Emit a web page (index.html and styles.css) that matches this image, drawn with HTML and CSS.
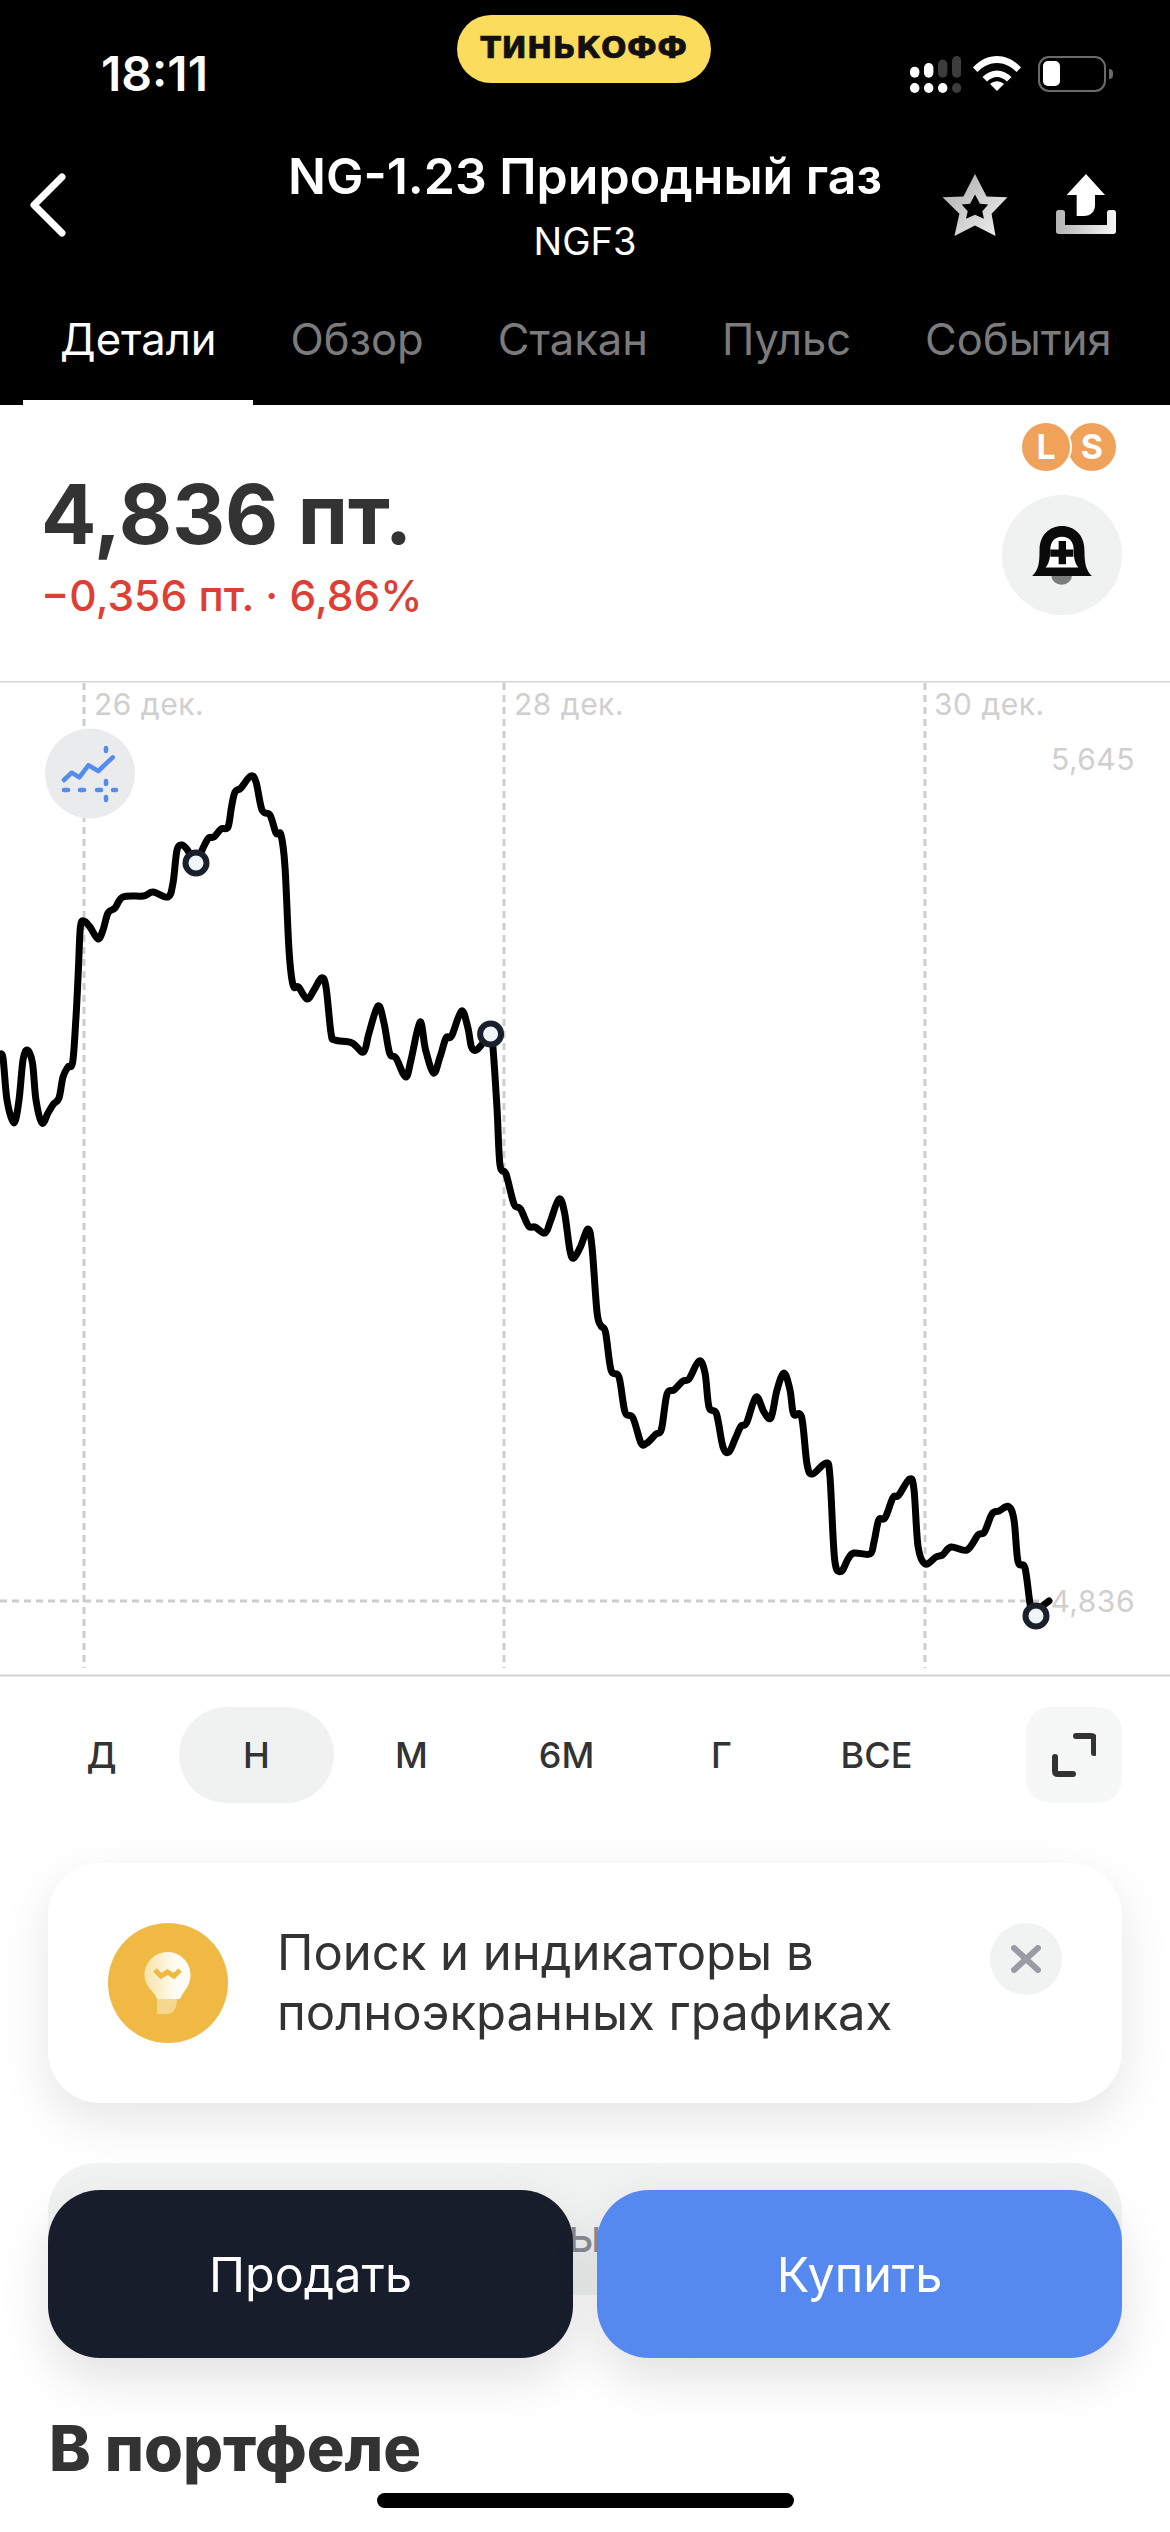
FILE: index.html
```html
<!doctype html>
<html lang="ru">
  <head>
    <meta charset="UTF-8" />
    <meta name="viewport" content="width=device-width, initial-scale=1" />
    <title>NG-1.23 Природный газ</title>
    <link rel="stylesheet" href="styles.css">
  </head>
  <body>
    <div class="phone">
      <header class="top">
        <div class="status">
          <span class="time">18:11</span>
          <div class="status-icons">
            <svg class="signal" width="54" height="44" viewBox="0 0 54 44">
              <rect x="3" y="10.7" width="9.4" height="11" rx="4.7" fill="#fff"/>
              <rect x="17" y="7" width="9.4" height="14.7" rx="4.7" fill="#fff"/>
              <rect x="31" y="3.5" width="9.4" height="18.2" rx="4.7" fill="#3c3c3c"/>
              <rect x="45" y="0" width="9.4" height="21.7" rx="4.7" fill="#3c3c3c"/>
              <rect x="3" y="27" width="9.4" height="10" rx="4.7" fill="#fff"/>
              <rect x="17" y="27" width="9.4" height="10" rx="4.7" fill="#fff"/>
              <rect x="31" y="27" width="9.4" height="10" rx="4.7" fill="#fff"/>
              <rect x="45" y="27" width="9.4" height="10" rx="4.7" fill="#3c3c3c"/>
            </svg>
            <svg class="wifi" width="48" height="35" viewBox="0 0 48 35">
              <path d="M0 11.5 C14 -3.8 34 -3.8 48 11.5 L43.6 16 C31.5 4 16.5 4 4.4 16 Z" fill="#fff"/>
              <path d="M9.5 21 C18 12.2 30 12.2 38.5 21 L34 25.4 C27.5 19.4 20.5 19.4 14 25.4 Z" fill="#fff"/>
              <path d="M17 28 C21.5 24.3 26.5 24.3 31 28 L24 35 Z" fill="#fff"/>
            </svg>
            <div class="battery"><span class="battery-level"></span></div>
            <span class="battery-tip"></span>
          </div>
        </div>
        <div class="brand">ТИНЬКОФФ</div>

        <div class="nav">
          <div class="nav-left">
            <svg width="40" height="64" viewBox="0 0 40 64">
              <path d="M34 4 L6 32 L34 60" fill="none" stroke="#fff" stroke-width="7" stroke-linecap="round" stroke-linejoin="round"/>
            </svg>
          </div>
          <div class="nav-title">
            <div class="title">NG-1.23 Природный газ</div>
            <div class="ticker">NGF3</div>
          </div>
          <div class="nav-right">
            <svg width="66" height="62" viewBox="187 435 196 187">
              <defs>
                <linearGradient id="starGrad" x1="0" y1="0" x2="1" y2="1">
                  <stop offset="0" stop-color="#a8a8a8"/>
                  <stop offset="1" stop-color="#f4f4f4"/>
                </linearGradient>
                <linearGradient id="trayGrad" x1="0" y1="0" x2="1" y2="0">
                  <stop offset="0" stop-color="#b4b4b4"/>
                  <stop offset="1" stop-color="#f6f6f6"/>
                </linearGradient>
              </defs>
              <path fill="url(#starGrad)" fill-rule="evenodd" d="M285 435 L320 503 L383 505 L335 555 L347 622 L285 590 L223 622 L238 555 L187 505 L250 503 Z M285 497 L270 525 L245 527 L263 547 L258 570 L285 558 L312 570 L307 547 L325 527 L300 525 Z"/>
            </svg>
            <svg width="60" height="60" viewBox="528 432 180 180">
              <path fill="#fff" d="M618 432 L675 495 L645 495 L645 525 C645 545 632 558 612 558 L590 558 L590 495 L560 495 Z"/>
              <path fill="url(#trayGrad)" d="M528 548 Q528 540 536 540 L547 540 Q555 540 555 548 L555 585 L681 585 L681 548 Q681 540 689 540 L700 540 Q708 540 708 548 L708 604 Q708 612 700 612 L536 612 Q528 612 528 604 Z"/>
            </svg>
          </div>
        </div>

        <nav class="tabs">
          <span class="tab tab-active">Детали</span>
          <span class="tab">Обзор</span>
          <span class="tab">Стакан</span>
          <span class="tab">Пульс</span>
          <span class="tab">События</span>
        </nav>
      </header>

      <section class="quote">
        <div>
          <div class="price">4,836 пт.</div>
          <div class="change">−0,356 пт. · 6,86%</div>
        </div>
        <div class="quote-side">
          <div class="badges">
            <span class="badge badge-s">S</span>
            <span class="badge badge-l">L</span>
          </div>
          <div class="bell">
            <svg width="60" height="59" viewBox="218 348 178 176">
              <path d="M275 495 a31 28 0 0 0 62 0 Z" fill="#7c7c7c"/>
              <path d="M218 497 C235 480 240 465 240 420 C240 375 270 348 307 348 C344 348 374 375 374 420 C374 465 380 480 396 497 Z" fill="#0a0a0a"/>
              <path d="M258 472 C268 460 272 445 272 420 C272 395 285 380 307 380 C329 380 342 395 342 420 C342 445 346 460 356 472 Z" fill="#fff"/>
              <path d="M297 393 H319 V418 H341 V440 H319 V462 H297 V440 H272 V418 H297 Z" fill="#0a0a0a"/>
            </svg>
          </div>
        </div>
      </section>

      <section class="chart">
        <svg class="chart-svg" width="1170" height="996" viewBox="0 681 1170 996">
          <line class="axis" x1="0" y1="681.5" x2="1170" y2="681.5"/>
          <line class="axis" x1="0" y1="1675.5" x2="1170" y2="1675.5"/>
          <line class="grid" x1="84" y1="683" x2="84" y2="1668"/>
          <line class="grid" x1="504" y1="683" x2="504" y2="1668"/>
          <line class="grid" x1="925" y1="683" x2="925" y2="1668"/>
          <line class="grid" x1="0" y1="1601" x2="1040" y2="1601"/>
          <text class="chart-label" x="94" y="715">26 дек.</text>
          <text class="chart-label" x="514" y="715">28 дек.</text>
          <text class="chart-label" x="934" y="715">30 дек.</text>
          <text class="chart-label" x="1135" y="770" text-anchor="end">5,645</text>
          <text class="chart-label" x="1135" y="1612" text-anchor="end">4,836</text>

          <circle cx="90" cy="773.5" r="45" fill="#e9ebec"/>
          <g class="ind-line">
            <path d="M64 780 L71.7 772.7 L79.3 777.3 L88.3 765.3 L98.3 771 L112.7 757.3"/>
          </g>
          <g class="ind-dash">
            <line x1="64" y1="790" x2="68" y2="790"/>
            <line x1="80" y1="790" x2="84" y2="790"/>
            <line x1="97" y1="790" x2="101" y2="790"/>
            <line x1="113" y1="790" x2="116" y2="790"/>
            <line x1="106" y1="748" x2="106" y2="751"/>
            <line x1="106" y1="781" x2="106" y2="784"/>
            <line x1="106" y1="797" x2="106" y2="800"/>
          </g>

          <path id="chartLine" class="price-line" d=""/>
          <circle class="marker" cx="196" cy="863" r="10.5"/>
          <circle class="marker" cx="490.6" cy="1034" r="10.5"/>
          <circle class="marker" cx="1036" cy="1616" r="10.5"/>
        </svg>
      </section>

      <div class="periods">
        <span class="period">Д</span>
        <span class="period period-active">Н</span>
        <span class="period">М</span>
        <span class="period">6М</span>
        <span class="period">Г</span>
        <span class="period">ВСЕ</span>
        <div class="expand">
          <svg width="44" height="44" viewBox="0 0 44 44">
            <path d="M24 3 H39 Q42 3 42 6 V20 M3 24 V38 Q3 41 6 41 H21" fill="none" stroke="#333" stroke-width="6" stroke-linecap="round"/>
          </svg>
        </div>
      </div>

      <section class="tip">
        <div class="tip-icon">
          <svg width="48" height="64" viewBox="144 1952 48 64">
            <defs>
              <linearGradient id="bulbGrad" x1="0" y1="0" x2="1" y2="0">
                <stop offset="0" stop-color="#f8e3a6"/>
                <stop offset="0.7" stop-color="#fffdf6"/>
              </linearGradient>
            </defs>
            <path fill="url(#bulbGrad)" d="M167.5 1953 C180 1953 190.5 1963 190.5 1976 C190.5 1985 186 1990 182 1996 L180 2000 L157 2000 L155 1996 C150 1990 144.500 1985 144.500 1976 C144.500 1963 155 1953 167.500 1953 Z"/>
            <path fill="#f5d88e" d="M157 2000 H177 C177 2009 173 2015 167 2015 H157 Z"/>
            <path fill="none" stroke="#efb944" stroke-width="5" d="M155 1971 L161 1977 L167.500 1973 L174 1977 L180 1971"/>
          </svg>
        </div>
        <p class="tip-text">Поиск и индикаторы в полноэкранных графиках</p>
        <div class="tip-close">
          <svg width="30" height="28" viewBox="0 0 30 28">
            <path d="M3 3 L27 25 M27 3 L3 25" stroke="#9a9ba5" stroke-width="6" stroke-linecap="round"/>
          </svg>
        </div>
      </section>

      <div class="under-card">ы</div>

      <h2 class="section-title">В портфеле</h2>

      <div class="actions">
        <button class="action action-sell" type="button">Продать</button>
        <button class="action action-buy" type="button">Купить</button>
      </div>
      <div class="home-bar"></div>
    </div>
    <script src="chart.js"></script>
  </body>
</html>
```

FILE: styles.css
```css
* {
  box-sizing: border-box;
}
body {
  margin: 0;
  font-family: Inter, "Noto Sans", sans-serif;
  background: #fff;
  color: #333;
}
.phone {
  position: relative;
  width: 1170px;
  height: 2532px;
  overflow: hidden;
  background: #fff;
}

/* header */
.top {
  background: #000;
  height: 405px;
  color: #fff;
}
.status {
  height: 140px;
  display: flex;
  justify-content: space-between;
  padding: 50px 55px 0 101px;
}
.time {
  font-size: 48px;
  font-weight: 600;
  line-height: 48px;
}
.status-icons {
  display: flex;
  align-items: flex-start;
  padding-top: 6px;
  width: 208px;
}
.signal {
  margin-right: 12px;
}
.battery {
  width: 68px;
  height: 36px;
  margin-left: 17px;
  border: 2.5px solid #6a6a6a;
  border-radius: 11px;
  padding: 3px;
}
.battery-level {
  display: block;
  width: 17px;
  height: 25px;
  background: #fff;
  border-radius: 5px;
}
.battery-tip {
  width: 4px;
  height: 10px;
  margin: 13px 0 0 3px;
  background: #6a6a6a;
  border-radius: 0 5px 5px 0;
}
.brand {
  position: absolute;
  top: 15px;
  left: 457px;
  width: 254px;
  height: 68px;
  border-radius: 34px;
  background: #fbdc5c;
  color: #111;
  font-family: "DejaVu Sans", sans-serif;
  font-size: 30px;
  font-weight: 700;
  line-height: 66px;
  letter-spacing: 0.5px;
  text-align: center;
  -webkit-text-stroke: 0.7px #111;
}
.nav {
  display: grid;
  grid-template-columns: 1fr auto 1fr;
  height: 130px;
  align-items: center;
}
.nav-left {
  padding: 0 0 0 28px;
  display: flex;
}
.nav-title {
  text-align: center;
  padding-top: 2px;
}
.title {
  font-size: 50px;
  font-weight: 600;
  line-height: 56px;
}
.ticker {
  font-size: 38px;
  line-height: 46px;
  margin-top: 14px;
}
.nav-right {
  display: flex;
  justify-content: flex-end;
  gap: 48px;
  padding-right: 54px;
}
.tabs {
  display: flex;
  height: 135px;
  padding: 0 0 0 23px;
}
.tab {
  height: 135px;
  padding: 44px 37px 0;
  font-size: 43.500px;
  line-height: 50px;
  color: #7b7b7b;
  white-space: nowrap;
}
.tab-active {
  color: #fff;
  border-bottom: 5px solid #fff;
}

/* price block */
.quote {
  display: flex;
  justify-content: space-between;
  height: 276px;
  padding: 65px 48px 0 41px;
}
.price {
  font-size: 82px;
  font-weight: 700;
  line-height: 90px;
  color: #333;
}
.change {
  margin-top: 11px;
  font-size: 42.500px;
  font-weight: 500;
  line-height: 50px;
  color: #dd3f35;
}
.quote-side {
  margin-top: -47px;
  display: flex;
  flex-direction: column;
  align-items: flex-end;
  gap: 24px;
}
.badges {
  position: relative;
  width: 94px;
  height: 48px;
  margin-right: 6px;
}
.badge {
  position: absolute;
  top: 0;
  width: 48px;
  height: 48px;
  border-radius: 50%;
  background: #f0a25a;
  color: #fff;
  font-size: 34px;
  font-weight: 700;
  line-height: 48px;
  text-align: center;
}
.badge-s {
  right: 0;
}
.badge-l {
  left: 0;
  box-shadow: 0 0 0 2px #fff;
}
.bell {
  width: 120px;
  height: 120px;
  border-radius: 50%;
  background: #f0f2f2;
  display: flex;
  align-items: center;
  justify-content: center;
}

/* chart */
.chart {
  position: relative;
  height: 996px;
}
.chart-svg {
  position: absolute;
  inset: 0;
}
.axis {
  stroke: #d4d4d4;
  stroke-width: 2;
}
.grid {
  stroke: #cdcdcd;
  stroke-width: 3;
  stroke-dasharray: 7 5;
}
.chart-label {
  font-size: 30px;
  fill: #cfcfcf;
  letter-spacing: 0.5px;
}
.ind-line path {
  fill: none;
  stroke: #558aef;
  stroke-width: 4.5;
  stroke-linecap: round;
  stroke-linejoin: round;
}
.ind-dash line {
  stroke: #558aef;
  stroke-width: 4.5;
  stroke-linecap: round;
}
.price-line {
  fill: none;
  stroke: #000;
  stroke-width: 7;
  stroke-linejoin: round;
  stroke-linecap: round;
}
.marker {
  fill: #f1f5f7;
  stroke: #1a1f2b;
  stroke-width: 6;
}

/* period switch */
.periods {
  display: flex;
  align-items: center;
  margin-top: 30px;
  padding-left: 24px;
  height: 96px;
}
.period {
  width: 155px;
  height: 96px;
  border-radius: 48px;
  font-size: 36px;
  font-weight: 500;
  line-height: 96px;
  text-align: center;
  color: #333;
}
.period-active {
  background: #f0f2f2;
}
.expand {
  width: 96px;
  height: 96px;
  margin-left: 72px;
  border-radius: 24px;
  background: #f6f7f7;
  display: flex;
  align-items: center;
  justify-content: center;
}

/* hint card */
.tip {
  position: relative;
  z-index: 1;
  display: flex;
  margin: 60px 48px 0;
  height: 240px;
  padding: 60px 60px 0 60px;
  background: #fff;
  border-radius: 52px;
  box-shadow: 0 18px 50px rgba(0, 0, 0, 0.1);
}
.tip-icon {
  flex: none;
  width: 120px;
  height: 120px;
  border-radius: 50%;
  background: #efb944;
  display: flex;
  align-items: center;
  justify-content: center;
}
.tip-text {
  width: 650px;
  margin: 0 0 0 49px;
  font-size: 49px;
  line-height: 60px;
  color: #333;
}
.tip-close {
  flex: none;
  width: 72px;
  height: 72px;
  margin-left: auto;
  border-radius: 50%;
  background: #f1f2f2;
  display: flex;
  align-items: center;
  justify-content: center;
}

.under-card {
  margin: 60px 48px 0;
  height: 132px;
  padding-top: 44px;
  background: #f1f2f2;
  border-radius: 48px 48px 0 0;
  color: #8c8c96;
  font-size: 46px;
  line-height: 56px;
  text-align: center;
}
.section-title {
  margin: 118px 0 0 49px;
  font-size: 63px;
  font-weight: 800;
  line-height: 70px;
  color: #333;
}

/* floating buttons */
.actions {
  position: absolute;
  top: 2190px;
  left: 48px;
  right: 48px;
  display: flex;
  gap: 24px;
}
.action {
  flex: 1;
  height: 168px;
  border: none;
  border-radius: 52px;
  color: #fff;
  font-family: inherit;
  font-size: 48.500px;
  box-shadow: 0 20px 50px rgba(0, 0, 0, 0.12);
}
.action-sell {
  background: #171d2a;
}
.action-buy {
  background: #5589ef;
}
.home-bar {
  position: absolute;
  left: 377px;
  top: 2493px;
  width: 417px;
  height: 15px;
  border-radius: 8px;
  background: #000;
}
```

FILE: chart.js
```js
// price points, page pixels
const points = [
  [0, 1055], [3, 1058], [7, 1100], [14, 1123], [19, 1100], [23, 1060], [27.5, 1050], [32.5, 1063],
  [36, 1100], [42, 1123], [48, 1113], [53.5, 1104], [59, 1098], [63, 1077], [68, 1067], [72.7, 1062],
  [76, 1017], [78.5, 967], [80.4, 927], [84, 921], [90, 927], [98, 939], [103, 930], [108, 913],
  [115, 908], [123, 897], [143.5, 896], [153, 892], [168, 897], [173, 883], [177, 850], [182, 845],
  [187.5, 850], [196, 863], [203, 848], [208.6, 838], [214, 837], [221, 829], [228, 827], [231.5, 807],
  [235, 792], [241, 788], [250.7, 776], [256, 782], [262, 810], [270, 815], [276, 833], [281, 835],
  [285, 867], [289, 950], [293, 985], [298.5, 987], [307, 999], [314, 990], [321.5, 978], [326, 987],
  [331, 1033], [335, 1040], [352, 1043], [363.5, 1052], [369, 1033], [378, 1006], [384, 1023],
  [389.6, 1053], [396, 1058], [405.7, 1077], [411, 1060], [420, 1022], [425.6, 1050], [433.6, 1073],
  [440, 1057], [446, 1038], [451.6, 1036], [461.5, 1011], [467.7, 1027], [471.5, 1047], [476.5, 1050],
  [483, 1043], [490.6, 1034], [493, 1048], [497, 1108], [500, 1165], [506, 1174], [514, 1204],
  [520.5, 1209], [528.5, 1226], [535, 1227], [545, 1233], [550.5, 1221], [559, 1199], [564.6, 1213],
  [570, 1251], [574, 1258], [580.4, 1247], [588, 1229], [592, 1247], [597, 1312], [601, 1326],
  [605.5, 1332], [611, 1370], [619, 1377], [625, 1412], [633, 1418], [641, 1443], [647, 1443],
  [656, 1434], [661.5, 1429], [667, 1394], [674, 1390], [683, 1381], [689, 1379], [699, 1361],
  [705, 1373], [709, 1407], [716.5, 1414], [723, 1447], [729, 1452], [735.5, 1438], [741, 1426],
  [746.5, 1423], [756, 1397], [764, 1412], [771, 1417.6], [777, 1390], [784, 1373], [790, 1390],
  [793.6, 1414], [801.6, 1417], [807, 1464], [812.6, 1474], [826, 1463], [830, 1477], [834.6, 1559],
  [841, 1571.5], [848, 1559], [854, 1553], [870, 1554], [874, 1542], [878.7, 1520], [885, 1518],
  [893, 1497.5], [898.5, 1495.5], [909.5, 1479], [914, 1489.6], [918, 1546], [925, 1564], [936, 1557],
  [942.5, 1555], [951, 1547], [967, 1550], [978, 1535], [984.4, 1532], [992, 1514], [999, 1511],
  [1008.6, 1506.5], [1014, 1520], [1018, 1561.6], [1025, 1568], [1030.6, 1607], [1036, 1617],
  [1041.6, 1607], [1049, 1601],
];

// catmull-rom through the points
let d = `M${points[0][0]} ${points[0][1]}`;
for (let i = 0; i < points.length - 1; i++) {
  const p0 = points[i - 1] || points[i];
  const p1 = points[i];
  const p2 = points[i + 1];
  const p3 = points[i + 2] || p2;
  const c1x = p1[0] + (p2[0] - p0[0]) / 6;
  const c1y = p1[1] + (p2[1] - p0[1]) / 6;
  const c2x = p2[0] - (p3[0] - p1[0]) / 6;
  const c2y = p2[1] - (p3[1] - p1[1]) / 6;
  d += ` C${c1x.toFixed(1)} ${c1y.toFixed(1)} ${c2x.toFixed(1)} ${c2y.toFixed(1)} ${p2[0]} ${p2[1]}`;
}
document.getElementById('chartLine').setAttribute('d', d);
```
